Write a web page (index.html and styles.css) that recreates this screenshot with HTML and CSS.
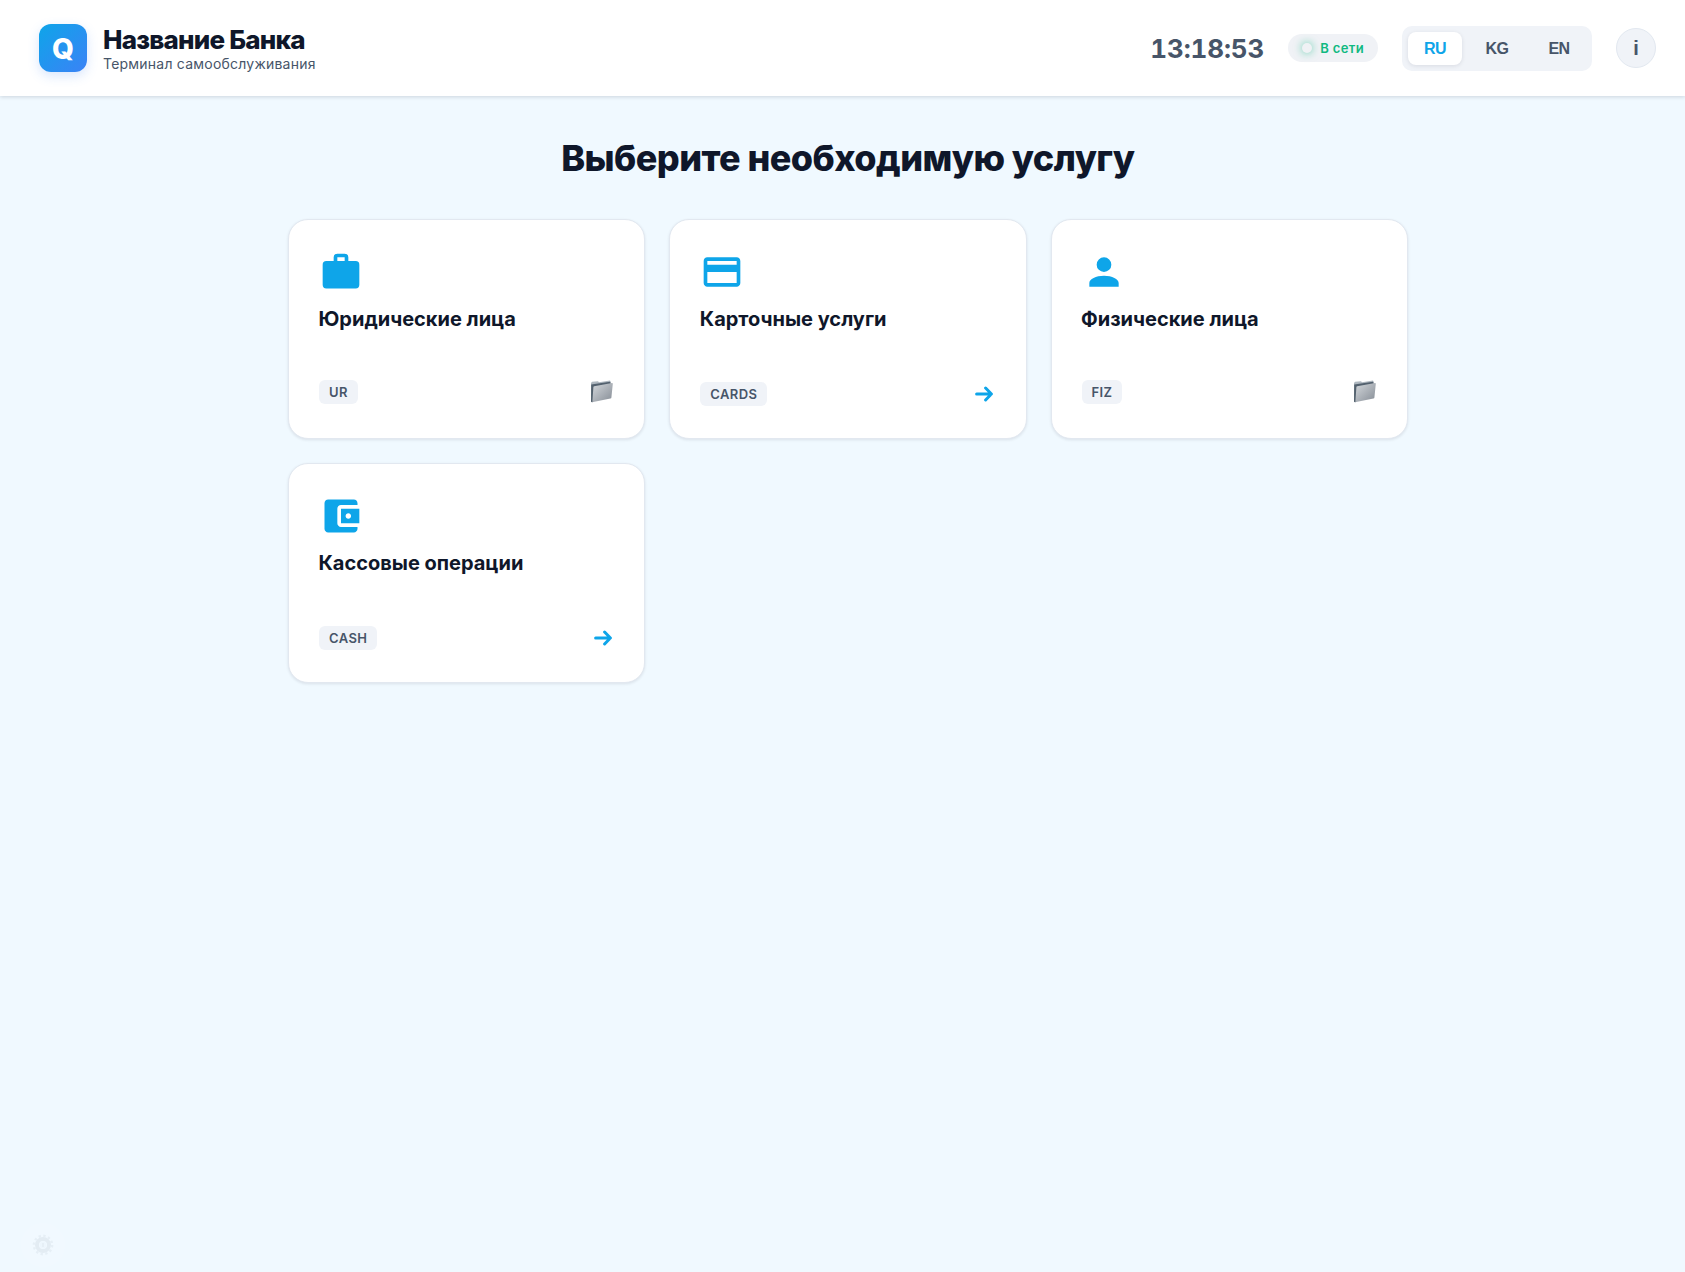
FILE: index.html
```html
<!DOCTYPE html>
<html lang="ru">
<head>
<meta charset="utf-8">
<title>Терминал самообслуживания</title>
<link rel="stylesheet" href="styles.css">
</head>
<body>
<svg width="0" height="0" class="defs" aria-hidden="true">
  <defs>
    <linearGradient id="front" x1="0" y1="0" x2="1" y2="1"><stop offset="0" stop-color="#d4d8dc"/><stop offset="1" stop-color="#858c95"/></linearGradient>
    <symbol id="arrow" viewBox="0 0 18 16"><path d="M1.6 8H16.2M10.6 2L16.4 8l-5.8 6" fill="none" stroke="#0ea5e9" stroke-width="3" stroke-linecap="round" stroke-linejoin="round"/></symbol>
    <symbol id="folder" viewBox="0 0 24 24"><path d="M1 3l1-1.2 6-.6 1 1 11-1.6 1 2L2 22.5l-1-.7z" fill="#aeb7bf"/><path d="M1.2 4.4l18.8-2.6.8 2L2.6 22.3l-1.6-.5z" fill="#53616e"/><path d="M4.2 6.2L22 2.9c.6 0 .9.3.8.9L21.4 17.4c0 .6-.4 1-1 1.1L3.2 22c-.5.1-.8-.1-.8-.6L3.4 7c0-.4.4-.7.8-.8z" fill="url(#front)"/></symbol>
  </defs>
</svg>
<header class="header">
  <div class="brand">
    <div class="logo">Q</div>
    <div>
      <div class="bank">Название Банка</div>
      <div class="tagline">Терминал самообслуживания</div>
    </div>
  </div>
  <div class="tools">
    <div class="clock">13:18:53</div>
    <div class="status"><span class="dot"></span>В сети</div>
    <div class="langs">
      <button class="lang active">RU</button>
      <button class="lang">KG</button>
      <button class="lang">EN</button>
    </div>
    <button class="info">i</button>
  </div>
</header>
<main class="main">
  <h1 class="title">Выберите необходимую услугу</h1>
  <div class="grid">
    <div class="card">
      <svg class="icon" viewBox="0 0 24 24"><path d="M10 2h4a2 2 0 0 1 2 2v2h4a2 2 0 0 1 2 2v11a2 2 0 0 1-2 2H4a2 2 0 0 1-2-2V8a2 2 0 0 1 2-2h4V4a2 2 0 0 1 2-2m4 4V4h-4v2h4z"/></svg>
      <h2 class="name">Юридические лица</h2>
      <div class="foot group"><span class="code">UR</span><svg class="folder"><use href="#folder"/></svg></div>
    </div>
    <div class="card">
      <svg class="icon" viewBox="0 0 24 24"><path d="M20 4H4c-1.11 0-1.99.89-1.99 2L2 18c0 1.11.89 2 2 2h16c1.11 0 2-.89 2-2V6c0-1.11-.89-2-2-2zm0 14H4v-6h16v6zm0-10H4V6h16v2z"/></svg>
      <h2 class="name">Карточные услуги</h2>
      <div class="foot"><span class="code">CARDS</span><svg class="arrow"><use href="#arrow"/></svg></div>
    </div>
    <div class="card">
      <svg class="icon" viewBox="0 0 24 24"><path d="M12 4a4 4 0 0 1 4 4 4 4 0 0 1-4 4 4 4 0 0 1-4-4 4 4 0 0 1 4-4m0 10c4.42 0 8 1.79 8 4v2H4v-2c0-2.21 3.58-4 8-4z"/></svg>
      <h2 class="name">Физические лица</h2>
      <div class="foot group"><span class="code">FIZ</span><svg class="folder"><use href="#folder"/></svg></div>
    </div>
    <div class="card">
      <svg class="icon" viewBox="0 0 24 24"><path d="M21 18v1c0 1.1-.9 2-2 2H5c-1.11 0-2-.9-2-2V5c0-1.1.89-2 2-2h14c1.1 0 2 .9 2 2v1h-9c-1.11 0-2 .9-2 2v8c0 1.1.89 2 2 2h9zm-9-2h10V8H12v8zm4-2.5c-.83 0-1.5-.67-1.5-1.5s.67-1.5 1.5-1.5 1.5.67 1.5 1.5-.67 1.5-1.5 1.5z"/></svg>
      <h2 class="name">Кассовые операции</h2>
      <div class="foot"><span class="code">CASH</span><svg class="arrow"><use href="#arrow"/></svg></div>
    </div>
  </div>
</main>
<button class="settings" aria-label="Настройки">
  <svg viewBox="0 0 22 22" width="22" height="22"><circle cx="11" cy="11" r="9.2" fill="none" stroke="#a3abb3" stroke-width="2.4" stroke-dasharray="2.4 2.417"/><circle cx="11" cy="11" r="6" fill="none" stroke="#8c959e" stroke-width="4"/><circle cx="11" cy="11" r="3.5" fill="#dfe5eb"/><path d="M11 9v4" stroke="#8c959e" stroke-width="1.5"/></svg>
</button>
</body>
</html>
```
FILE: styles.css
```css
* { box-sizing: border-box; }
body {
  margin: 0;
  min-height: 1272px;
  background: #f0f9ff;
  color: #0f172a;
  font-family: Inter, "Liberation Sans", sans-serif;
}
button { font: inherit; border: 0; padding: 0; }
.defs { position: absolute; }
.header {
  height: 96px;
  padding: 0 29px 0 39px;
  display: flex;
  align-items: center;
  justify-content: space-between;
  background: #fff;
  box-shadow: 0 1px 4px rgba(15, 23, 42, .16);
}
.brand { display: flex; align-items: center; gap: 16px; }
.logo {
  width: 48px;
  height: 48px;
  padding-top: 2px;
  border-radius: 12px;
  display: grid;
  place-items: center;
  background: linear-gradient(135deg, #0ea5e9, #3b82f6);
  box-shadow: 0 4px 12px rgba(59, 130, 246, .2);
  color: #fff;
  font-size: 28px;
  font-weight: 800;
}
.bank { padding-bottom: 1px; font-size: 26px; font-weight: 800; line-height: 29px; letter-spacing: -.78px; }
.tagline { font-size: 14px; line-height: 17px; letter-spacing: .22px; color: #475569; }
.tools { display: flex; align-items: center; gap: 24px; }
.clock { color: #475569; font-size: 26px; font-weight: 700; font-variant-numeric: tabular-nums; letter-spacing: -.1px; }
.status {
  height: 28px;
  padding: 0 14px;
  border-radius: 14px;
  display: flex;
  align-items: center;
  gap: 8px;
  background: #f0f2f6;
  color: #10b981;
  font-size: 13px;
  font-weight: 600;
  letter-spacing: .35px;
}
.dot { width: 10px; height: 10px; border-radius: 50%; background: #f0f2f5; box-shadow: 0 0 8px rgba(16, 185, 129, .65); }
.langs { display: flex; gap: 8px; padding: 6px; border-radius: 10px; background: #f0f3f8; }
.lang {
  width: 54px;
  height: 33px;
  border-radius: 8px;
  background: none;
  color: #475569;
  font: 700 16px/33px "Liberation Sans", sans-serif;
  letter-spacing: -.6px;
}
.lang.active { background: #fff; color: #0ea5e9; box-shadow: 0 1px 4px rgba(15, 23, 42, .1); }
.info {
  width: 40px;
  height: 40px;
  border: 1px solid #e2e8f0;
  border-radius: 50%;
  background: #f0f3f8;
  color: #475569;
  font: 700 20px/38px "Liberation Sans", sans-serif;
}
.main { padding: 40px 277.2px 0 288px; }
.title { margin: 0 0 39px; text-align: center; font-size: 36px; line-height: 44px; font-weight: 800; letter-spacing: -.56px; }
.grid { display: grid; grid-template-columns: repeat(3, 1fr); gap: 24px; }
.card {
  height: 220px;
  padding: 30px;
  border: 1px solid #e2e8f0;
  border-radius: 20px;
  background: #fff;
  box-shadow: 0 1px 3px rgba(15, 23, 42, .1);
  display: flex;
  flex-direction: column;
}
.icon { width: 44px; height: 44px; flex: none; fill: #0ea5e9; }
.name { margin: 12px 0 0 -.5px; font-size: 20px; line-height: 26px; font-weight: 700; letter-spacing: -.01px; }
.foot { margin-top: auto; padding-bottom: 2px; display: flex; align-items: center; justify-content: space-between; }
.foot.group { padding-bottom: 4px; }
.code { height: 24px; padding: 0 10px; border-radius: 6px; background: #f0f3f8; color: #475569; font-size: 13px; line-height: 24px; font-weight: 600; letter-spacing: .4px; }
.arrow { width: 18px; height: 16px; margin-right: 2.5px; }
.folder { width: 24px; height: 24px; }
.settings {
  position: fixed;
  left: 20.5px;
  bottom: 5px;
  width: 44px;
  height: 44px;
  border-radius: 50%;
  display: grid;
  place-items: center;
  background: #fff;
  opacity: .12;
}
```
